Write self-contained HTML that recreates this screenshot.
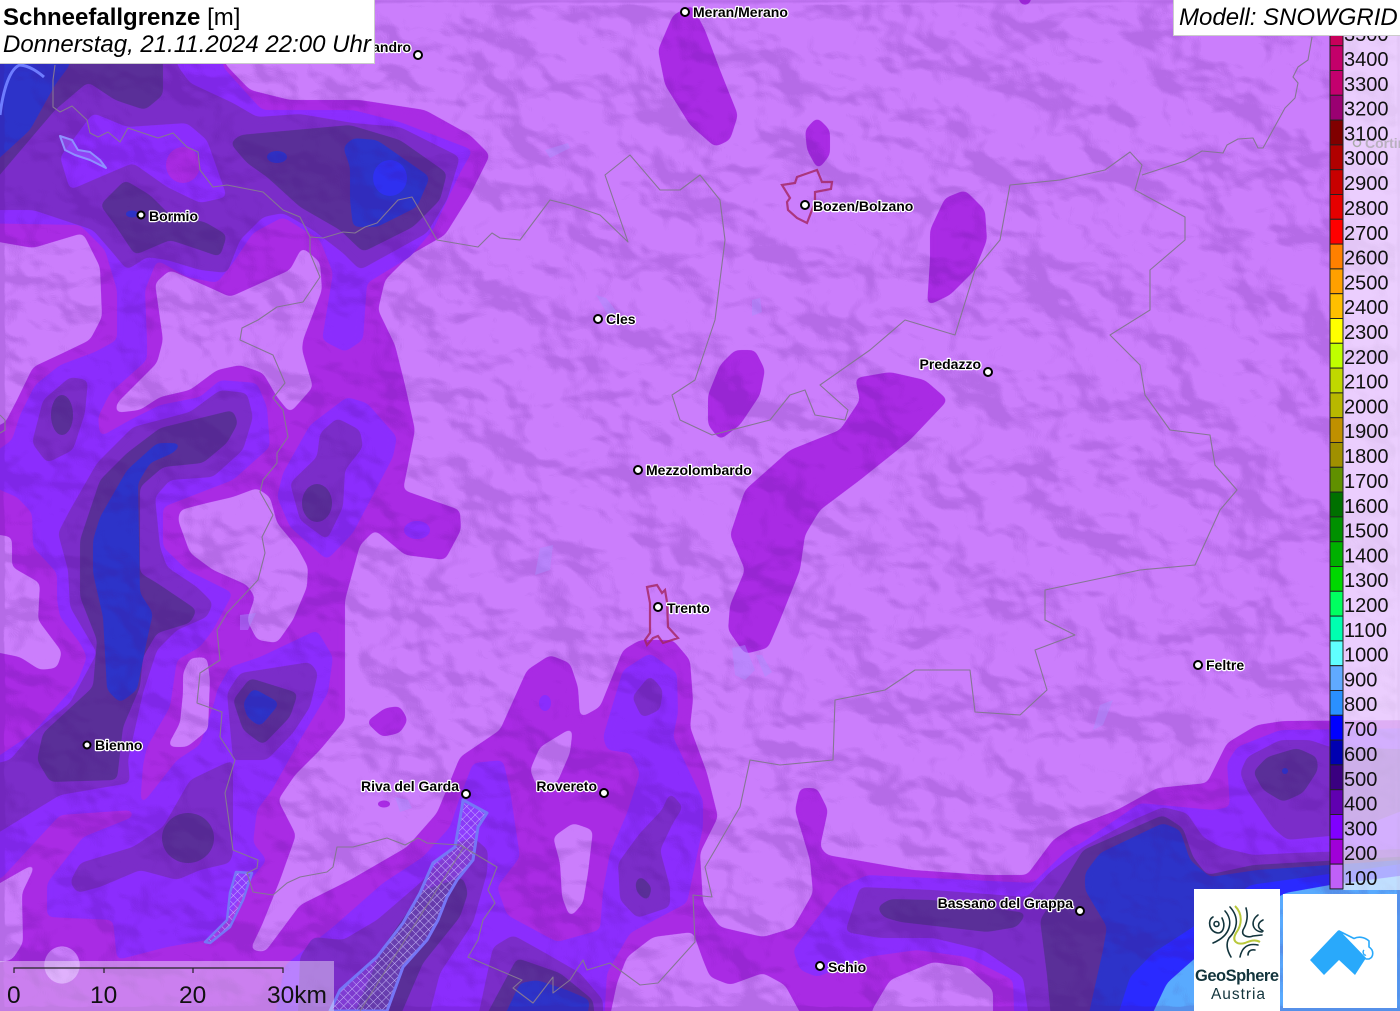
<!DOCTYPE html>
<html lang="de"><head><meta charset="utf-8"><title>Schneefallgrenze</title>
<style>
html,body{margin:0;padding:0;background:#c87bfa}
#m{position:relative;width:1400px;height:1011px;overflow:hidden;font-family:"Liberation Sans",sans-serif}
svg{position:absolute;left:0;top:0}
.c text{font:bold 14px "Liberation Sans",sans-serif;fill:#000;stroke:#fff;stroke-width:2.4px;paint-order:stroke;stroke-linejoin:round}
.d circle{fill:#fff;stroke:#000;stroke-width:2}
#t1{position:absolute;left:0;top:0;width:374px;height:63px;background:#fff;border-right:1px solid #ccc;border-bottom:1px solid #ccc;color:#000;font-size:24px;line-height:28px;white-space:nowrap}
#t1 div{position:absolute;left:3px}
#t2{position:absolute;left:1173px;top:0;width:227px;height:36px;background:#fff;border-left:1px solid #ccc;border-bottom:1px solid #ccc;box-sizing:border-box;font-size:24px;font-style:italic;line-height:36px;padding-left:5px;white-space:nowrap;overflow:hidden}
#pan{position:absolute;left:1343px;top:35px;width:57px;height:855px;background:rgba(255,255,255,.62)}
#sb{position:absolute;left:0;top:961px;width:334px;height:50px;background:rgba(255,255,255,.4)}
</style></head><body><div id="m">
<svg width="1400" height="1011" viewBox="0 0 1400 1011">
<defs>
<filter id="s" filterUnits="userSpaceOnUse" x="-60" y="-60" width="1520" height="1130" color-interpolation-filters="sRGB"><feGaussianBlur stdDeviation="3.4"/><feComponentTransfer><feFuncA type="linear" slope="14" intercept="-6.5"/></feComponentTransfer></filter>
<filter id="t" x="0" y="0" width="100%" height="100%" color-interpolation-filters="sRGB"><feTurbulence type="fractalNoise" baseFrequency=".012 .017" numOctaves="4" seed="11" result="n"/><feGaussianBlur in="n" stdDeviation="2.2" result="b"/><feDiffuseLighting in="b" surfaceScale="22" diffuseConstant="1" lighting-color="#fff"><feDistantLight azimuth="315" elevation="60"/></feDiffuseLighting><feColorMatrix values="0 0 0 0 .28 0 0 0 0 .05 0 0 0 0 .5 -3.2 0 0 0 2.75"/></filter>
<pattern id="h" width="6" height="6" patternUnits="userSpaceOnUse" patternTransform="rotate(45)"><rect width="6" height="6" fill="#9a78ff" fill-opacity=".22"/><path d="M0 0H6M0 0V6" stroke="#cfc4ff" stroke-width="1" opacity=".85"/></pattern>
</defs>
<rect width="1400" height="1011" fill="#cb7efc"/>
<g filter="url(#s)" fill="#a92be4">
<polygon points="-30,-30,215,-30,225,64,250,90,290,100,360,100,425,110,470,135,490,155,470,195,445,235,410,255,385,280,378,310,395,345,405,385,415,430,403,490,460,510,461,530,445,560,405,555,375,530,360,545,345,600,345,650,345,690,345,720,320,750,295,775,278,800,296,835,280,880,262,925,250,950,265,952,300,905,350,880,407,847,437,813,460,757,500,730,527,670,550,655,570,663,578,687,580,718,600,707,623,650,640,640,673,640,690,660,693,700,690,727,707,773,718,817,700,853,703,903,720,927,763,937,793,928,813,893,810,860,795,810,800,788,817,788,828,810,820,847,827,855,913,870,987,875,1027,875,1053,840,1073,827,1117,810,1157,788,1207,783,1227,743,1257,725,1283,721,1430,720,1430,1040,-30,1040"/>
<polygon points="673,15,692,5,705,30,720,70,738,115,730,140,715,147,690,125,665,85,658,50"/>
<polygon points="805,130,817,117,830,130,830,155,818,170,807,150"/>
<polygon points="945,198,965,190,985,210,987,240,975,270,950,295,927,306,930,260,930,230"/>
<polygon points="735,350,755,350,765,370,760,395,740,425,720,440,708,425,708,395,720,365"/>
<polygon points="855,378,890,372,925,380,948,400,910,440,860,480,820,510,805,535,800,570,780,620,768,648,745,654,728,630,730,605,745,570,730,535,745,490,790,450,840,430,860,400"/>
<polygon points="366,722,385,708,400,706,408,720,400,733,382,737"/>
<polygon points="1015,-20,1035,-20,1030,5,1020,5"/><polygon points="490,-20,505,-20,500,2"/>
</g>
<ellipse cx="384" cy="804" rx="6" ry="3.5" fill="#a92be4"/>
<g filter="url(#s)" fill="#8b2dfd">
<polygon points="-30,-30,215,-30,223,67,250,97,262,110,353,110,400,122,473,150,460,173,433,230,410,257,367,283,363,340,345,352,322,340,333,273,320,240,283,217,253,233,233,263,217,283,187,277,157,260,145,290,147,340,147,360,110,393,98,417,100,437,130,420,160,405,200,397,220,380,257,383,267,407,270,447,233,480,207,490,163,507,163,547,187,570,233,593,213,630,200,647,177,660,170,707,147,747,143,765,140,807,177,760,200,745,215,700,217,690,230,667,260,657,317,630,333,657,328,693,300,740,272,790,257,810,253,843,267,860,253,877,227,920,207,940,167,947,117,960,113,920,47,917,47,883,83,837,133,817,133,810,60,815,0,880,-30,870,-30,775,33,733,77,683,87,657,80,643,60,617,57,600,57,573,33,547,32,513,17,497,0,490,-30,470,12,440,20,415,35,385,60,365,95,352,117,340,117,290,105,250,80,225,-30,223"/>
<polygon points="283,473,277,497,290,527,327,560,353,533,393,457,397,437,367,403,347,397,310,425"/>
<polygon points="270,1040,285,965,333,927,383,883,423,857,450,827,460,797,473,763,503,760,510,790,520,857,497,887,507,915,557,942,600,930,603,890,610,853,627,813,640,773,630,753,607,750,603,737,623,670,650,653,677,673,678,713,673,737,703,800,703,827,687,903,630,933,607,973,603,1040"/>
<polygon points="793,950,840,888,867,875,1033,883,1067,850,1083,842,1140,803,1213,810,1230,807,1227,763,1237,747,1280,730,1430,728,1430,1040,1015,1040,1013,980,967,957,917,950,867,957,817,977,800,970"/>
</g>
<ellipse cx="417" cy="530" rx="13" ry="9" fill="#8b2dfd"/>
<ellipse cx="545" cy="703" rx="6" ry="8" fill="#8b2dfd"/>
<g filter="url(#s)" fill="#cb7efc">
<polygon points="-30,237,33,248,83,233,100,267,102,317,90,340,63,353,33,367,17,400,5,423,-30,436"/>
<polygon points="155,283,170,270,215,290,230,297,290,270,302,247,320,262,322,290,303,340,302,350,313,387,290,413,277,397,263,373,240,365,217,370,190,390,160,397,140,410,115,413,117,403,157,363,163,340"/>
<polygon points="178,520,180,510,207,503,233,497,257,488,270,497,277,523,297,547,308,567,307,587,293,620,277,643,257,640,247,620,255,597,247,585,213,570,190,553"/>
<polygon points="183,673,190,658,207,657,210,680,208,730,187,747,167,747,180,723,183,693"/>
<polygon points="-30,530,12,537,12,567,40,583,38,620,62,652,57,668,40,670,20,657,-30,647"/>
<polygon points="-30,900,37,862,22,893,23,943,12,960,-30,968"/>
<polygon points="530,770,540,747,573,727,570,753,557,783,537,787"/>
<polygon points="553,837,573,823,593,830,588,873,583,903,570,918,562,897,560,863"/>
<polygon points="617,983,627,957,653,937,693,932,703,960,710,977,730,985,763,973,785,985,815,1040,605,1040"/>
<polygon points="870,1040,872,1010,890,980,933,962,967,967,993,990,993,1040"/>
<ellipse cx="62" cy="965" rx="18" ry="19"/>
</g>
<g filter="url(#s)" fill="#7b2dc9">
<polygon points="-30,-30,170,-30,177,65,190,83,233,103,257,117,300,114,353,123,400,127,460,157,447,200,427,233,360,270,343,253,313,230,283,213,263,217,240,240,227,273,200,270,167,260,147,257,127,270,113,253,93,230,33,210,-30,210"/>
<polygon points="32,443,43,400,70,377,88,380,85,413,73,450,47,463"/>
<polygon points="58,533,70,510,97,463,133,427,190,412,220,390,247,393,253,417,243,450,213,477,170,480,155,497,160,547,167,567,197,587,213,603,207,617,177,630,157,650,143,693,128,760,130,783,60,795,-30,850,-30,770,10,760,33,733,70,703,97,653,70,607,68,570"/>
<polygon points="290,483,317,457,320,433,337,418,360,430,363,447,345,470,343,507,327,540,300,520"/>
<polygon points="227,693,240,673,310,662,318,673,310,707,293,733,267,760,233,760"/>
<polygon points="70,882,80,863,133,847,163,827,190,780,217,767,233,760,233,853,230,863,200,870,177,880,140,870,100,887,77,893"/>
<polygon points="297,1040,300,957,313,937,343,940,377,920,420,883,457,843,473,837,488,850,487,873,473,923,440,973,423,1040"/>
<polygon points="473,1040,493,947,513,935,540,950,580,973,603,1000,603,1040"/>
<polygon points="632,697,650,675,663,690,660,710,642,718"/>
<polygon points="618,863,640,833,662,810,670,792,683,807,673,823,660,850,670,887,670,907,637,918,620,900"/>
<polygon points="845,932,860,887,933,890,1027,897,1050,872,1083,847,1133,820,1163,807,1187,813,1203,837,1220,847,1253,855,1293,853,1430,848,1430,1040,1032,1040,1023,977,983,950,933,938,880,938"/>
<polygon points="1240,773,1247,757,1280,740,1310,740,1330,747,1430,750,1430,800,1340,835,1287,840,1273,828,1247,790"/>
</g>
<g filter="url(#s)" fill="#8b2dfd">
<polygon points="60,157,93,113,127,127,187,123,207,140,227,197,200,203,167,187,133,163,100,177,70,190"/>
</g>
<ellipse cx="183" cy="165" rx="17" ry="18" fill="#a92be4"/>
<g filter="url(#s)" fill="#5a2f98">
<polygon points="-30,-30,163,-30,163,95,145,110,115,100,88,82,55,110,-30,210"/>
<polygon points="100,205,125,180,150,195,170,215,205,222,227,235,220,257,200,250,170,240,135,255,115,225"/>
<polygon points="230,143,240,135,350,125,400,140,447,173,440,200,413,227,363,252,340,230,300,207,267,177,247,163"/>
<polygon points="80,540,100,480,127,453,160,428,233,410,238,423,227,443,203,463,163,467,140,487,140,573,157,583,197,610,190,623,157,633,143,657,140,687,123,727,117,780,50,782,37,760,43,733,93,687,97,640,80,597"/>
<polygon points="233,700,250,678,298,693,290,717,263,745,243,730"/>
<polygon points="343,1040,383,947,423,890,463,877,468,893,460,917,423,963,390,1040"/>
<polygon points="473,1040,517,958,560,973,593,1000,597,1040"/>
<polygon points="635,883,640,875,652,887,648,902,637,893"/>
<polygon points="877,907,890,899,933,900,1027,913,1017,927,987,932,900,922,883,917"/>
<polygon points="1040,920,1062,885,1083,850,1163,815,1183,828,1193,857,1207,875,1253,865,1430,855,1430,1040,1053,1040,1047,975"/>
<polygon points="1253,772,1267,757,1297,748,1317,757,1318,770,1303,793,1283,802,1263,790"/>
</g>
<g fill="#5a2f98"><ellipse cx="62" cy="415" rx="11" ry="20"/><ellipse cx="317" cy="503" rx="15" ry="19"/><ellipse cx="188" cy="838" rx="26" ry="25"/></g>
<g filter="url(#s)" fill="#2d33c9">
<polygon points="-30,-30,72,-30,70,65,55,85,30,130,-30,185"/>
<polygon points="343,147,353,138,377,140,430,177,417,207,377,227,353,227,350,200,350,167"/>
<polygon points="93,540,100,517,127,470,157,443,183,443,173,453,150,463,138,483,140,593,153,613,147,640,137,690,120,703,107,690,103,617,93,573"/>
<polygon points="243,703,253,688,280,703,260,727,247,717"/>
<polygon points="493,1040,520,983,537,980,567,990,590,1000,583,1040"/>
<polygon points="1085,873,1100,853,1163,823,1180,830,1190,860,1210,877,1257,870,1430,858,1430,1040,1083,1040,1103,950,1107,927,1085,890"/>
</g>
<ellipse cx="277" cy="157" rx="10" ry="6" fill="#2d33c9"/>
<ellipse cx="132" cy="214" rx="6" ry="3.5" fill="#2d33c9"/>
<ellipse cx="390" cy="178" rx="17" ry="18" fill="#2f30f0"/>
<ellipse cx="1285" cy="771" rx="3" ry="3" fill="#2d33c9"/>
<g filter="url(#s)" fill="#2a2aff"><polygon points="1110,1040,1130,977,1153,953,1193,927,1250,885,1430,860,1430,1040"/></g>
<g filter="url(#s)" fill="#59aafe"><polygon points="1140,1040,1167,983,1193,960,1240,920,1285,893,1330,885,1430,872,1430,1040"/></g>
<rect width="1400" height="1011" filter="url(#t)" opacity=".16"/>
<g fill="#a890ff" fill-opacity=".45" stroke="none">
<polygon points="545,150,568,143,570,148,550,158"/><polygon points="596,295,606,298,617,312,608,315"/>
<polygon points="752,300,760,298,762,312,752,316"/><polygon points="540,548,553,545,550,570,535,575"/>
<polygon points="1100,705,1113,700,1103,725,1093,730"/><polygon points="240,615,256,613,248,630,240,630"/>
<polygon points="732,648,745,645,755,670,745,680,735,675"/><polygon points="756,655,762,655,772,672,765,677"/>
<polygon points="395,797,408,800,412,808,400,812"/>
</g>
<g fill="url(#h)" stroke="#7676f6" stroke-width="3" stroke-linejoin="round">
<polygon points="463,800,487,813,478,827,473,860,457,880,447,897,438,920,427,940,403,967,387,1011,330,1011,340,990,377,957,403,923,420,893,433,863,455,847,462,807"/>
<polygon stroke-width="2.5" points="205,942,227,920,230,893,236,872,252,873,243,900,230,927,210,943"/>
<polygon stroke="#8f8fff" stroke-width="2" fill="#a060ff" fill-opacity=".5" points="60,136,72,140,78,150,90,152,100,160,106,168,90,160,75,155,65,150"/>
</g>
<path d="M0 115C3 90 10 68 20 65C30 66 38 72 44 77" fill="none" stroke="#6e7cff" stroke-width="3"/>
<g fill="none" stroke="#857694" stroke-width="1.1" stroke-linejoin="round">
<polyline points="55,65,53,80,53,107,60,112,72,106,87,120,90,133,98,137,108,132,120,142,128,128,158,138,173,133,187,147,198,152,200,170,213,187,227,185,263,192,283,210,300,217,310,237,323,238,343,232,355,233,365,227,377,223,398,200,412,197,437,240,478,247,492,233,500,238,520,240,550,200,570,205,600,215,628,242,605,175,630,155,660,190,680,190,700,175,720,200,725,240,715,320,695,380,672,395,680,420,712,435,770,420,790,395,805,390,815,415,845,420,848,410,820,385,870,350,905,320,955,335,975,270,1000,240,1010,185,1060,180,1105,170,1130,152,1142,165,1135,190,1185,217,1185,240,1150,270,1150,310,1110,335,1140,365,1145,395,1170,430,1210,435,1215,465,1237,490,1220,510,1195,565,1140,570,1045,590,1045,620,1075,635,1035,650,1047,690,1020,715,975,712,970,670,915,670,885,690,835,700,833,760,780,765,750,760,740,807,715,850,705,867,712,897,693,895,695,942,658,983,640,985,610,963,587,970,583,960,570,980,553,993,553,977,533,1003,513,988,522,980,468,957,478,940,483,920,495,903,488,890,497,867,460,845,427,843,418,838,405,845,387,838,353,847,337,847,333,867,327,872,300,877,287,883,273,895,253,892,247,873,257,868,258,860,233,850,225,793,235,760,220,737,222,712,197,703,200,673,220,660,217,630,227,613,258,580,265,553,262,537,273,515,260,492,263,480,277,463,277,453,288,437,283,410,273,398,285,383,273,355,240,340,242,328,258,320,277,307,303,302,320,277,310,253,310,237"/>
<polyline points="1312,37,1308,60,1298,67,1293,77,1298,83,1295,98,1285,108,1263,148,1258,148,1253,138,1238,139,1227,145,1223,153,1202,151,1185,161,1142,175"/>
<polyline points="464,847,360,1011"/>
<polyline points="0,415,5,420,5,430,0,433"/>
</g>
<g fill="none" stroke="#a3245f" stroke-opacity=".8" stroke-width="2.2" stroke-linejoin="miter">
<polygon points="647,587,657,585,662,593,665,590,667,602,668,627,678,638,663,643,658,636,653,638,647,645,645,640,650,633,650,603"/>
<polygon points="782,185,795,183,797,177,817,170,822,182,832,182,831,189,815,192,815,202,807,223,797,218,788,210,787,202,790,198"/>
</g>
<g class="d">
<circle cx="685" cy="12" r="4"/><circle cx="418" cy="55" r="4"/><circle cx="141" cy="215" r="3.5"/><circle cx="805" cy="205" r="4"/><circle cx="598" cy="319" r="4"/><circle cx="988" cy="372" r="4"/><circle cx="638" cy="470" r="4"/><circle cx="658" cy="607" r="4"/><circle cx="1198" cy="665" r="4"/><circle cx="87" cy="745" r="3.5"/><circle cx="466" cy="794" r="4"/><circle cx="604" cy="793" r="4"/><circle cx="1080" cy="911" r="4"/><circle cx="820" cy="966" r="4"/>
</g>
<g class="c">
<text x="693" y="17">Meran/Merano</text>
<text x="411" y="52" text-anchor="end">Sondrio Sandro</text>
<text x="149" y="221">Bormio</text>
<text x="813" y="211">Bozen/Bolzano</text>
<text x="606" y="324">Cles</text>
<text x="981" y="369" text-anchor="end">Predazzo</text>
<text x="646" y="475">Mezzolombardo</text>
<text x="667" y="613">Trento</text>
<text x="1206" y="670">Feltre</text>
<text x="95" y="750">Bienno</text>
<text x="459" y="791" text-anchor="end">Riva del Garda</text>
<text x="597" y="791" text-anchor="end">Rovereto</text>
<text x="1073" y="908" text-anchor="end">Bassano del Grappa</text>
<text x="828" y="972">Schio</text>
</g>
</svg>
<div id="pan"></div>
<svg width="1400" height="1011" viewBox="0 0 1400 1011" style="pointer-events:none">
<circle cx="1357" cy="143" r="3.5" fill="none" stroke="#aaa" stroke-width="1.5"/>
<text x="1365" y="148" font-family="Liberation Sans" font-weight="bold" font-size="14" fill="#b9b0bf">Cortina</text>
<g stroke="#222" stroke-width="1">
<rect x="1330" y="20" width="13" height="25.7" fill="#c8005a"/><rect x="1330" y="45.7" width="13" height="24.8" fill="#c4006a"/><rect x="1330" y="70.5" width="13" height="24.8" fill="#c4006e"/><rect x="1330" y="95.3" width="13" height="24.8" fill="#9a0072"/><rect x="1330" y="120.1" width="13" height="24.8" fill="#800000"/><rect x="1330" y="144.9" width="13" height="24.8" fill="#b00000"/><rect x="1330" y="169.7" width="13" height="24.8" fill="#c80000"/><rect x="1330" y="194.5" width="13" height="24.8" fill="#e60000"/><rect x="1330" y="219.3" width="13" height="24.8" fill="#ff0000"/><rect x="1330" y="244.1" width="13" height="24.8" fill="#ff8000"/><rect x="1330" y="268.9" width="13" height="24.8" fill="#ffa000"/><rect x="1330" y="293.7" width="13" height="24.8" fill="#ffbf00"/><rect x="1330" y="318.5" width="13" height="24.8" fill="#ffff00"/><rect x="1330" y="343.3" width="13" height="24.8" fill="#bfff00"/><rect x="1330" y="368.1" width="13" height="24.8" fill="#c0d800"/><rect x="1330" y="392.9" width="13" height="24.8" fill="#b8b800"/><rect x="1330" y="417.7" width="13" height="24.8" fill="#c09000"/><rect x="1330" y="442.5" width="13" height="24.8" fill="#a09000"/><rect x="1330" y="467.3" width="13" height="24.8" fill="#609000"/><rect x="1330" y="492.1" width="13" height="24.8" fill="#007000"/><rect x="1330" y="516.9" width="13" height="24.8" fill="#009000"/><rect x="1330" y="541.7" width="13" height="24.8" fill="#00b000"/><rect x="1330" y="566.5" width="13" height="24.8" fill="#00d800"/><rect x="1330" y="591.3" width="13" height="24.8" fill="#00ff60"/><rect x="1330" y="616.1" width="13" height="24.8" fill="#00ffb0"/><rect x="1330" y="640.9" width="13" height="24.8" fill="#60ffff"/><rect x="1330" y="665.7" width="13" height="24.8" fill="#60aaff"/><rect x="1330" y="690.5" width="13" height="24.8" fill="#2a90ff"/><rect x="1330" y="715.3" width="13" height="24.8" fill="#0000ff"/><rect x="1330" y="740.1" width="13" height="24.8" fill="#0000b0"/><rect x="1330" y="764.9" width="13" height="24.8" fill="#3a0080"/><rect x="1330" y="789.7" width="13" height="24.8" fill="#6000b0"/><rect x="1330" y="814.5" width="13" height="24.8" fill="#8000ff"/><rect x="1330" y="839.3" width="13" height="24.8" fill="#a000d8"/><rect x="1330" y="864.1" width="13" height="24.8" fill="#c060f8"/>
</g>
<g font-family="Liberation Sans" font-size="20" fill="#111">
<text x="1344" y="41">3500</text><text x="1344" y="66">3400</text><text x="1344" y="91">3300</text><text x="1344" y="115.5">3200</text><text x="1344" y="140.5">3100</text><text x="1344" y="165">3000</text><text x="1344" y="190">2900</text><text x="1344" y="215">2800</text><text x="1344" y="240">2700</text><text x="1344" y="264.5">2600</text><text x="1344" y="289.5">2500</text><text x="1344" y="314">2400</text><text x="1344" y="339">2300</text><text x="1344" y="364">2200</text><text x="1344" y="388.5">2100</text><text x="1344" y="413.5">2000</text><text x="1344" y="438">1900</text><text x="1344" y="463">1800</text><text x="1344" y="488">1700</text><text x="1344" y="513">1600</text><text x="1344" y="537.5">1500</text><text x="1344" y="562.5">1400</text><text x="1344" y="587">1300</text><text x="1344" y="612">1200</text><text x="1344" y="637">1100</text><text x="1344" y="661.5">1000</text><text x="1344" y="686.5">900</text><text x="1344" y="711">800</text><text x="1344" y="736">700</text><text x="1344" y="761">600</text><text x="1344" y="786">500</text><text x="1344" y="810.5">400</text><text x="1344" y="835.5">300</text><text x="1344" y="860">200</text><text x="1344" y="885">100</text>
</g>
</svg>
<div id="t1"><div style="top:4px"><b>Schneefallgrenze</b> [m]</div><div style="top:31px;font-style:italic">Donnerstag, 21.11.2024 22:00 Uhr</div></div>
<div id="t2">Modell: SNOWGRID</div>
<div id="sb"></div>
<svg width="1400" height="1011" viewBox="0 0 1400 1011" style="pointer-events:none">
<path d="M14 973V968H283V973M104 968V973M193 968V973" fill="none" stroke="#222" stroke-width="1.2"/>
<g font-family="Liberation Sans" font-size="24.5" fill="#111"><text x="7" y="1003">0</text><text x="90" y="1003">10</text><text x="179" y="1003">20</text><text x="267" y="1003">30km</text></g>
<rect x="1194" y="889" width="86" height="122" fill="#fff"/>
<rect x="1283" y="894" width="114" height="114" fill="#fff"/>
<g fill="none" stroke="#12343c" stroke-width="1.6" stroke-linecap="round">
<circle cx="1216.5" cy="924" r="2.5"/>
<path d="M1213 917C1207 920 1209 932 1218 933C1223 933 1226 926 1222 918"/>
<path d="M1225 911C1233 920 1232 935 1213 943"/>
<path d="M1230 907C1240 918 1237 930 1229 938C1225 945 1228 952 1231 957"/>
<path d="M1246 908C1249 918 1246 925 1243 930C1241 936 1248 938 1253 936L1262 935"/>
<path d="M1258 915C1250 921 1252 931 1262 932"/>
<path d="M1263 920C1257 923 1257 928 1263 931"/>
<path d="M1258 945C1248 943 1242 947 1240 957"/>
<path d="M1255 950C1250 949 1248 952 1248 955"/>
</g>
<path d="M1235 906C1243 914 1242 925 1236 933C1231 942 1238 945 1245 943C1250 941 1255 939 1260 942" fill="none" stroke="#b9c83b" stroke-width="2"/>
<text x="1195" y="981" font-family="Liberation Sans" font-weight="bold" font-size="16.5" fill="#12343c" textLength="84" lengthAdjust="spacing">GeoSphere</text>
<text x="1211" y="999" font-family="Liberation Sans" font-size="15.5" fill="#12343c" textLength="54" lengthAdjust="spacing">Austria</text>
<path d="M1310 960L1338 930.5L1366 958L1355 975L1339 960L1324 975Z" fill="#29a9fb"/>
<path d="M1339 931L1354 938.5C1358 936.5 1364 936.5 1369 941L1369 947C1374 950 1374 957 1369 959L1366 959Z" fill="#fff" stroke="#29a9fb" stroke-width="1.6" stroke-linejoin="round"/>
<path d="M1364 950C1362 952 1364 956 1366 955" fill="none" stroke="#29a9fb" stroke-width="1.4"/>
</svg>
</div></body></html>
